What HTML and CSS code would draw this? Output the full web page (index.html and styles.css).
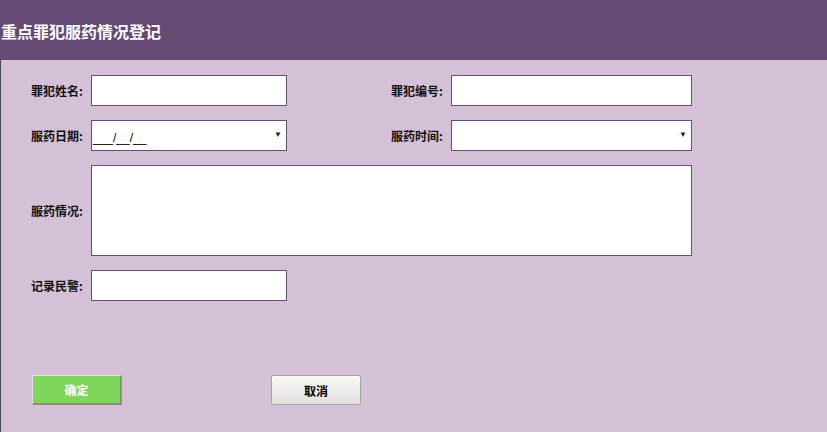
FILE: index.html
```html
<!DOCTYPE html>
<html>
<head>
    <title>重点罪犯服药情况登记</title>
    <link rel="stylesheet" href="styles.css">
</head>
<body>
    <div class="header">
        <h1>重点罪犯服药情况登记</h1>
    </div>
    <div class="content">
        <div class="row">
            <label class="label">罪犯姓名:</label>
            <input type="text" class="field short">
            <label class="label right-label">罪犯编号:</label>
            <input type="text" class="field long">
        </div>
        <div class="row">
            <label class="label">服药日期:</label>
            <div class="field short select">
                <span class="date">___/__/__</span>
                <span class="arrow">&#9660;</span>
            </div>
            <label class="label right-label">服药时间:</label>
            <div class="field long select">
                <span class="date"></span>
                <span class="arrow">&#9660;</span>
            </div>
        </div>
        <div class="row">
            <label class="label">服药情况:</label>
            <textarea class="field wide"></textarea>
        </div>
        <div class="row">
            <label class="label">记录民警:</label>
            <input type="text" class="field short">
        </div>
        <div class="buttons">
            <button class="btn btn-ok">确定</button>
            <button class="btn btn-cancel">取消</button>
        </div>
    </div>
</body>
</html>
```

FILE: styles.css
```css
html, body{
    margin: 0;
    height: 100%;
}
body{
    background-color: #d4c1d7;
    font-family: "Noto Sans CJK SC", "Liberation Sans", sans-serif;
    overflow: hidden;
}
.header{
    height: 60px;
    background-color: #654a73;
    display: flex;
    align-items: center;
}
.header h1{
    margin: 0 0 0 1px;
    color: #ffffff;
    font-size: 16px;
    font-weight: 700;
    line-height: 20px;
    position: relative;
    top: 1px;
}
.content{
    border-left: 1px solid #434850;
    height: calc(100% - 60px);
    box-sizing: border-box;
    padding: 15px 0 0 30px;
}
.row{
    display: flex;
    align-items: center;
    margin-bottom: 14px;
}
.label{
    width: 52px;
    margin-right: 8px;
    font-size: 12px;
    font-weight: 700;
    color: #111;
    text-align: right;
    white-space: nowrap;
}
.right-label{
    margin-left: 104px;
}
.field{
    box-sizing: border-box;
    height: 31px;
    margin: 0;
    background-color: #ffffff;
    border: 1px solid #6a4d79;
    outline: none;
    font-family: "Liberation Sans", sans-serif;
}
.short{
    width: 196px;
}
.long{
    width: 241px;
}
.wide{
    width: 601px;
    height: 91px;
    resize: none;
}
.select{
    display: flex;
    align-items: center;
    justify-content: space-between;
    padding: 0 4px 0 1px;
}
.date{
    font-size: 12px;
    color: #000;
    position: relative;
    top: 2px;
}
.arrow{
    font-size: 8px;
    color: #222;
    position: relative;
    top: -1px;
}
.buttons{
    display: flex;
    margin-top: 74px;
    padding-left: 1px;
}
.btn{
    width: 90px;
    height: 30px;
    font-family: "Noto Sans CJK SC", sans-serif;
    font-size: 12px;
    font-weight: 700;
    cursor: pointer;
}
.btn-ok{
    background-color: #7ed65a;
    color: #ffffff;
    border-style: solid;
    border-width: 1px 2px 2px 1px;
    border-color: #e2e2e2 #8c8c8c #8c8c8c #e2e2e2;
}
.btn-cancel{
    margin-left: 149px;
    color: #000;
    background: linear-gradient(#f8f8f6, #e2e0dc);
    border: 1px solid #a3a3a3;
    border-radius: 2px;
}
```
